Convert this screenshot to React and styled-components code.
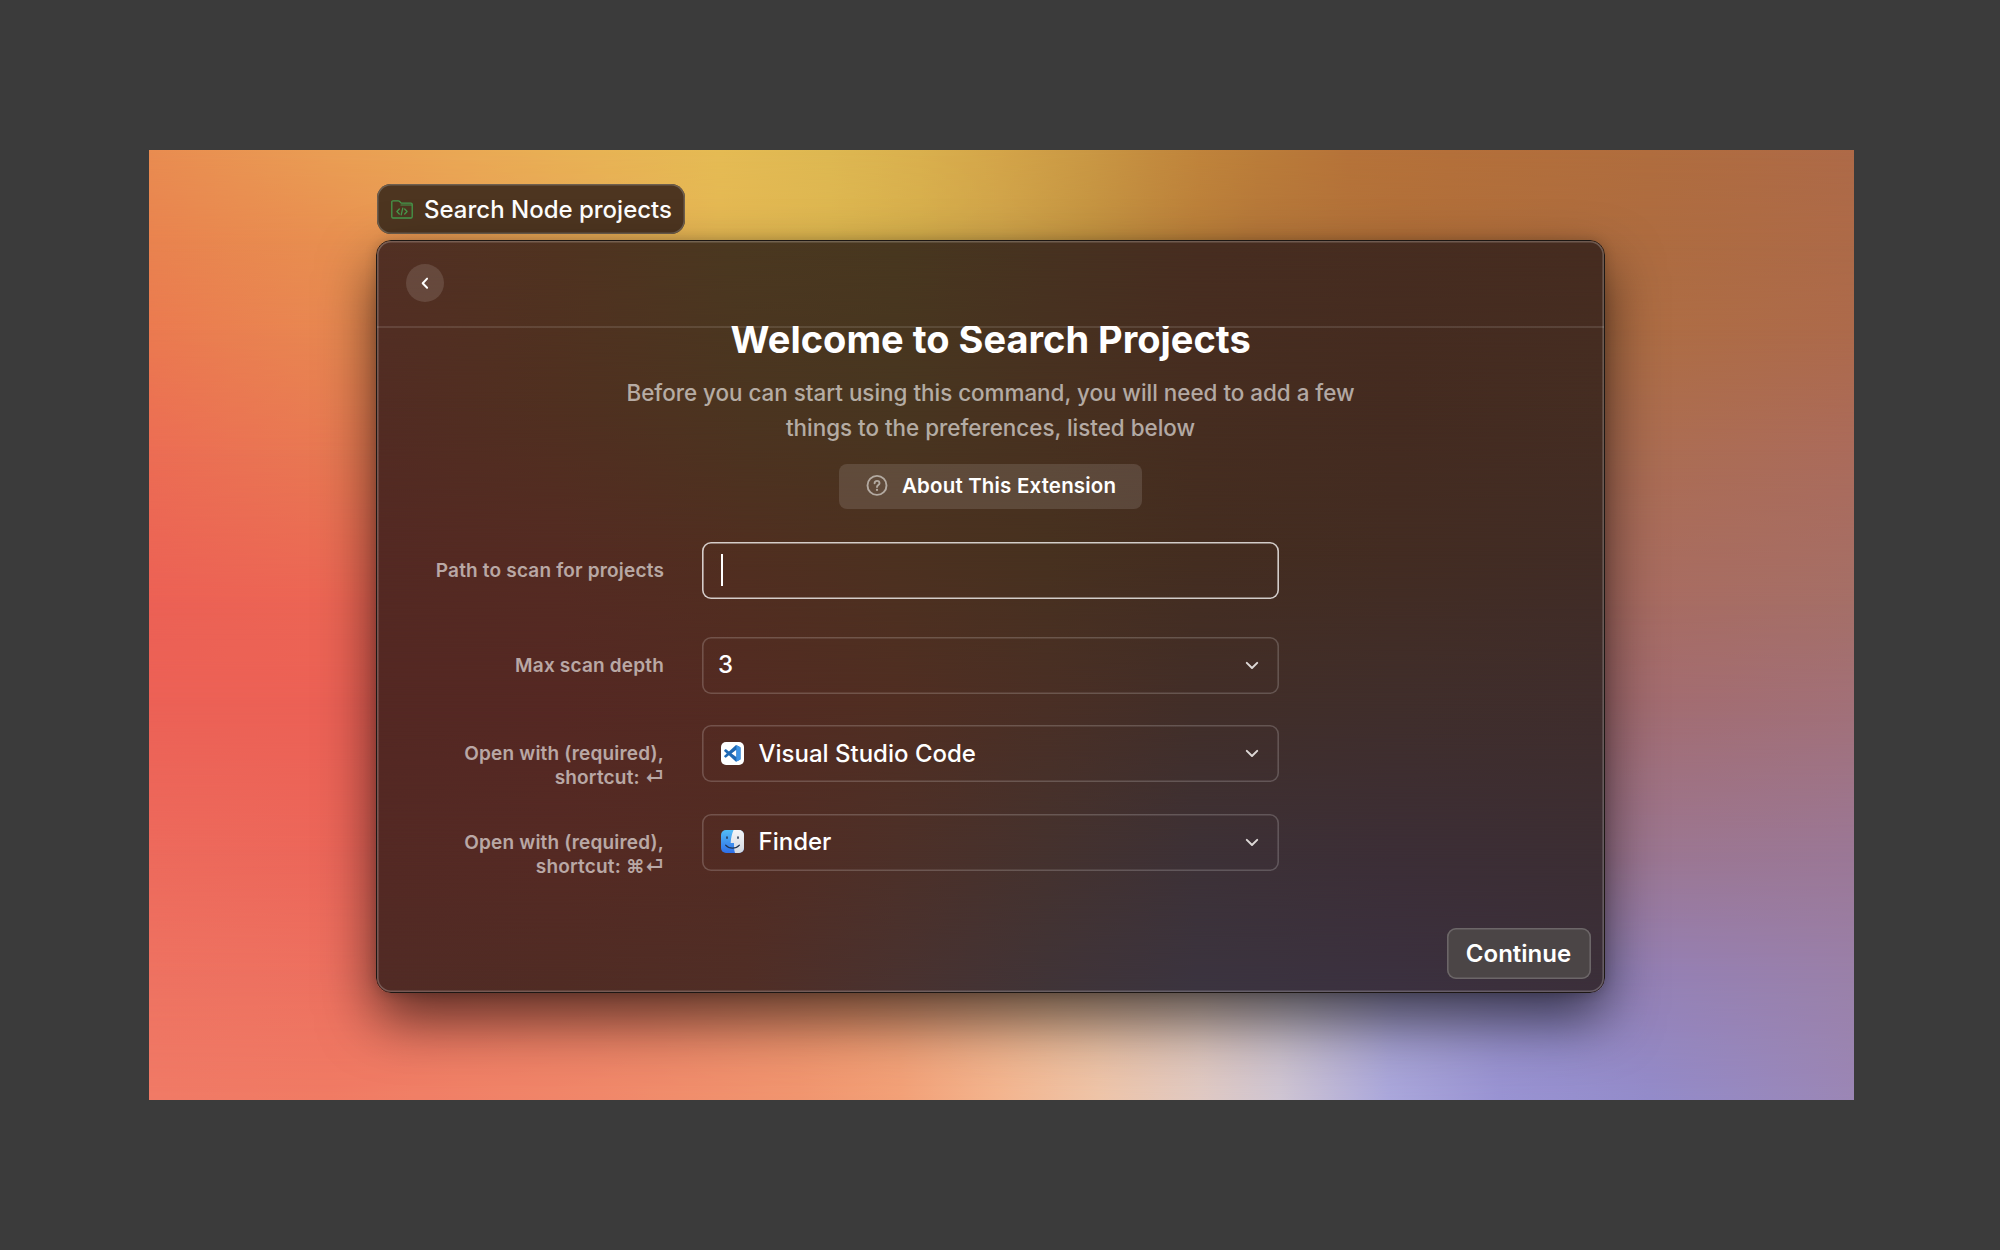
import React from "react";
import styled, { createGlobalStyle } from "styled-components";

const GlobalStyle = createGlobalStyle`
  * { box-sizing: border-box; }
  body { margin: 0; background: #3b3b3b; font-family: Inter, "Noto Sans", sans-serif; }
`;

/* Each row is [y, [x, colour]...] in pixels of the surface it fills. */
const wallpaperRows = [
  [0, [0, "#e98c51"], [180, "#ea9e54"], [320, "#eaa955"], [450, "#e8b355"], [570, "#e5bb54"], [680, "#deb852"], [770, "#dab04e"], [850, "#d4a549"], [940, "#ca9844"], [1000, "#c48c3f"], [1050, "#c0843b"], [1110, "#bb7d39"], [1200, "#b67339"], [1300, "#b4703a"], [1500, "#b06d3e"], [1705, "#ae6a48"]],
  [90, [0, "#e9834f"], [180, "#e88f50"], [320, "#e99d53"], [450, "#e8ab55"], [570, "#e5b853"], [680, "#deb750"], [770, "#d6af4c"], [850, "#cfa44a"], [940, "#c49441"], [1000, "#be883d"], [1050, "#ba7f3a"], [1110, "#b5773a"], [1250, "#b16f39"], [1500, "#ae6c40"], [1705, "#ad6a48"]],
  [180, [0, "#eb7a50"], [200, "#e88951"], [1500, "#ae6d44"], [1705, "#ad6a4b"]],
  [300, [0, "#ec6d54"], [200, "#e87a52"], [1500, "#ac6d52"], [1705, "#ab6b5b"]],
  [450, [0, "#ec6155"], [200, "#ec6654"], [1500, "#a86c62"], [1705, "#a56f67"]],
  [550, [0, "#ec6156"], [200, "#ec6155"], [1500, "#a36c70"], [1705, "#a27077"]],
  [700, [0, "#ed6a5c"], [200, "#ec6659"], [1500, "#9c7690"], [1705, "#9b7795"]],
  [820, [0, "#ee7261"], [200, "#ed705f"], [500, "#ea8064"], [700, "#f09a70"], [900, "#e8b894"], [1050, "#d8bfb4"], [1150, "#bdb4c4"], [1250, "#a09ac8"], [1400, "#9088c4"], [1500, "#9580b4"], [1705, "#9a80a8"]],
  [950, [0, "#f07a66"], [180, "#f07b64"], [450, "#f0886a"], [650, "#f0956f"], [750, "#f2a077"], [850, "#f3b48e"], [950, "#eec4a8"], [1050, "#e0c9c2"], [1130, "#cfc5d2"], [1240, "#aaa7db"], [1350, "#9993d2"], [1500, "#938bca"], [1705, "#9b86b5"]],
];

const glassRows = [
  [0, [0, "#523024"], [180, "#503320"], [350, "#4b3820"], [520, "#48371f"], [670, "#473220"], [820, "#472d20"], [1229, "#462c20"]],
  [160, [0, "#522c23"], [180, "#503020"], [370, "#4b3520"], [520, "#483620"], [670, "#483120"], [820, "#462d20"], [1020, "#442b20"], [1229, "#452d22"]],
  [310, [0, "#542923"], [180, "#542b22"], [370, "#502f20"], [520, "#4c3120"], [670, "#47311f"], [820, "#442d20"], [1020, "#432c22"], [1229, "#412c25"]],
  [460, [0, "#542823"], [180, "#552823"], [370, "#532b22"], [520, "#502e22"], [670, "#4a2f25"], [820, "#422e28"], [1020, "#402e2b"], [1229, "#3f2d2c"]],
  [610, [0, "#542924"], [180, "#552a24"], [370, "#522c23"], [520, "#4d3028"], [670, "#45322e"], [820, "#3d3136"], [1020, "#3c2e36"], [1229, "#3c2e33"]],
  [753, [0, "#512b25"], [180, "#502c24"], [370, "#502e26"], [520, "#493230"], [670, "#403438"], [820, "#3b3440"], [1020, "#3b3140"], [1229, "#3b2f3a"]],
];

const MeshLayer = styled.div`
  position: absolute;
  inset: 0;
`;

function Mesh({ rows }) {
  return rows.map(([y, ...stops], i) => {
    const background = `linear-gradient(to right, ${stops.map(([x, c]) => `${c} ${x}px`).join(", ")})`;
    const mask = i ? `linear-gradient(to bottom, transparent ${rows[i - 1][0]}px, #000 ${y}px)` : "none";
    return <MeshLayer key={y} style={{ background, maskImage: mask }} />;
  });
}

const Page = styled.div`
  width: 2000px;
  height: 1250px;
  padding: 150px 146px 150px 149px;
  background: #3b3b3b;
`;

const Wallpaper = styled.div`
  position: relative;
  height: 100%;
  padding: 34px 0 0 227px;
  overflow: hidden;
`;

const Stack = styled.div`
  position: relative;
  display: flex;
  flex-direction: column;
  align-items: flex-start;
  gap: 6px;
`;

const CommandTag = styled.div`
  display: flex;
  align-items: center;
  gap: 11px;
  width: 308px;
  height: 50px;
  margin-left: 1px;
  padding: 0 0 0 14px;
  border-radius: 14px;
  background: #4d3520;
  box-shadow: inset 0 0 0 1.5px #6e5f4f;
  color: #fff;
  font-size: 24px;
  font-weight: 500;
  white-space: nowrap;
`;

const Window = styled.main`
  position: relative;
  width: 1229px;
  height: 753px;
  border: 1px solid #1d1714;
  border-radius: 15px;
  overflow: hidden;
  display: flex;
  flex-direction: column;
`;

const WindowShadow = styled.div`
  border-radius: 15px;
  box-shadow: 0 26px 56px rgba(0, 0, 0, 0.62), 0 0 12px rgba(0, 0, 0, 0.18);
`;

const WindowEdge = styled.div`
  position: absolute;
  inset: 0;
  border-radius: 14px;
  box-shadow: inset 0 0 0 1.6px rgba(255, 255, 255, 0.22);
  pointer-events: none;
`;

const Header = styled.header`
  position: relative;
  height: 85px;
  padding: 23px 0 0 29px;
`;

const BackButton = styled.button`
  display: grid;
  place-items: center;
  width: 38px;
  height: 38px;
  padding: 0;
  border: 0;
  border-radius: 50%;
  background: rgba(255, 255, 255, 0.12);
`;

const Body = styled.section`
  position: relative;
  flex: 1;
  overflow: hidden;
  display: flex;
  flex-direction: column;
  align-items: center;
  background: linear-gradient(rgba(255, 255, 255, 0.11), rgba(255, 255, 255, 0.11)) top / 100% 2px no-repeat;
`;

const Title = styled.h1`
  margin: -10px 0 0;
  color: #fff;
  font-size: 38px;
  font-weight: 700;
  line-height: 46px;
`;

const Intro = styled.p`
  width: 760px;
  margin: 13.4px 0 0;
  color: rgba(255, 255, 255, 0.6);
  font-size: 22.4px;
  font-weight: 500;
  line-height: 35px;
  text-align: center;
`;

const AboutButton = styled.button`
  display: flex;
  align-items: center;
  gap: 14px;
  width: 303px;
  height: 45px;
  margin-top: 18.6px;
  padding: 0 0 2px 27px;
  border: 0;
  border-radius: 8px;
  background: rgba(255, 255, 255, 0.12);
  color: #fff;
  font: 600 20.5px Inter, sans-serif;
  letter-spacing: 0.17px;
  white-space: nowrap;
`;

const Form = styled.div`
  display: flex;
  flex-direction: column;
  gap: 31.5px;
  margin-top: 33px;
`;

const FormRow = styled.div`
  display: grid;
  grid-template-columns: 288px 577px 288px;
  grid-template-rows: 57px;
  column-gap: 38px;
  margin-bottom: ${(p) => (p.$spaced ? "6.5px" : 0)};
`;

const Label = styled.label`
  padding-top: 16.6px;
  color: rgba(255, 255, 255, 0.6);
  font-size: 19px;
  font-weight: 600;
  letter-spacing: 0.18px;
  line-height: 24px;
  text-align: right;
  white-space: pre-line;
`;

const Field = styled.div`
  display: flex;
  align-items: center;
  gap: 15px;
  height: 57px;
  padding: 0 20px 1px ${(p) => (p.$inset ? "18.5px" : "16px")};
  border-radius: 9px;
  box-shadow: inset 0 0 0 1.6px ${(p) => (p.$focused ? "rgba(255, 255, 255, 0.76)" : "rgba(255, 255, 255, 0.19)")};
  color: #fff;
  font-size: 24px;
  font-weight: 500;
`;

const Value = styled.span`
  flex: 1;
`;

const Caret = styled.span`
  width: 2px;
  height: 32px;
  background: #fff;
`;

const Footer = styled.footer`
  position: relative;
  display: flex;
  justify-content: flex-end;
  padding: 0 13px 13px 0;
`;

const ContinueButton = styled.button`
  width: 144px;
  height: 51px;
  margin-top: -1px;
  padding: 0 1px 0 0;
  border: 0;
  border-radius: 9px;
  background: #4b4546;
  box-shadow: inset 0 0 0 1.6px #6c6668;
  color: #fff;
  font: 600 24px Inter, sans-serif;
`;

const FolderIcon = () => (
  <svg width="22" height="19" viewBox="0 0 22 19" fill="none" stroke="#469a4c" strokeWidth="1.3" strokeLinecap="round" strokeLinejoin="round">
    <path d="M.8 2V16.8Q.8 18 2 18H20Q21.2 18 21.2 16.8V4.3Q21.2 3.1 20 3.1H10.2L8.4 1.3Q7.9.8 7.2.8H2Q.8.8.8 2Z" />
    <path d="M10 5H20.8" strokeWidth="1.1" />
    <path d="M8.3 9L5.9 11.5 8.3 14M13.7 9L16.1 11.5 13.7 14M11.8 8.2L10.2 14.8" />
  </svg>
);

const BackIcon = () => (
  <svg width="10" height="14" viewBox="0 0 10 14" fill="none" stroke="#fff" strokeWidth="2" strokeLinecap="round" strokeLinejoin="round">
    <path d="M7.1 2.6L2.7 7.2 7.1 11.8" />
  </svg>
);

const HelpIcon = () => (
  <svg width="22" height="22" viewBox="0 0 22 22" fill="none" stroke="#b3aaa1" strokeWidth="1.9" strokeLinecap="round" strokeLinejoin="round">
    <circle cx="11" cy="11.4" r="9.5" />
    <path d="M8.6 9.2C8.6 6 13.5 6.1 13.5 9.2C13.5 11 11 11.1 11 13" />
    <path d="M11 15.8V15.9" strokeWidth="2.2" />
  </svg>
);

const ChevronIcon = () => (
  <svg width="14" height="10" viewBox="0 0 14 10" fill="none" stroke="#ddd8d6" strokeWidth="2" strokeLinecap="round" strokeLinejoin="round">
    <path d="M1.8 2.9L7 8 12.2 2.9" />
  </svg>
);

const CodeIcon = () => (
  <svg width="23" height="23" viewBox="0 0 23 23">
    <rect width="23" height="23" rx="5" fill="#fff" />
    <g transform="translate(3.1 3.2) scale(.164)">
      <path fill="#1f68b3" fillRule="evenodd" d="M70.9 99.3C72.5 99.9 74.3 99.9 75.9 99.1L96.5 89.2C98.6 88.2 100 86 100 83.6V16.4C100 14 98.6 11.8 96.5 10.8L75.9.9C73.8-.1 71.3.1 69.5 1.4L29.4 38 12.2 25C10.6 23.8 8.4 23.9 6.9 25.2L1.4 30.3C-.5 31.9-.5 34.8 1.4 36.4L16.2 50 1.4 63.6C-.5 65.2-.5 68.1 1.4 69.7L6.9 74.8C8.4 76.1 10.6 76.2 12.2 75L29.4 62 68.8 97.9C69.4 98.5 70.1 99 70.9 99.3ZM75 27.3L45.1 50 75 72.7Z" />
      <path fill="#3e93e4" d="M75.9 99.1L96.5 89.2C98.6 88.2 100 86 100 83.6V16.4C100 14 98.6 11.8 96.5 10.8L75.9.9C73.8-.1 71.3.1 69.5 1.4C72 .5 75 2.5 75 6V94C75 97.5 72 99.5 70.5 99.2C72.5 99.9 74.3 99.9 75.9 99.1Z" />
    </g>
  </svg>
);

const FinderIcon = () => (
  <svg width="23" height="23" viewBox="0 0 23 23" fill="none" strokeLinecap="round">
    <defs>
      <linearGradient id="finderBlue" x1="0" y1="0" x2="0" y2="1">
        <stop offset="0" stopColor="#52bdf7" />
        <stop offset="1" stopColor="#2f6fe8" />
      </linearGradient>
      <linearGradient id="finderWhite" x1="0" y1="0" x2="0" y2="1">
        <stop offset="0" stopColor="#f4f5f7" />
        <stop offset="1" stopColor="#d3d9e1" />
      </linearGradient>
      <clipPath id="finderShape">
        <rect width="23" height="23" rx="5" />
      </clipPath>
    </defs>
    <g clipPath="url(#finderShape)">
      <rect width="23" height="23" fill="url(#finderBlue)" />
      <path d="M12.6 0C10.8 4 9.9 8.5 9.7 12.9H13C12.9 16.5 13.1 20 14 23H23V0Z" fill="url(#finderWhite)" />
    </g>
    <path d="M6 6.9V8.3M17 6.9V8.3" stroke="#1f3350" strokeWidth="1.5" />
    <path d="M4.6 15.2C8.2 19.2 14.8 19.2 18.4 15.2" stroke="#1f3350" strokeWidth="1.2" />
  </svg>
);

function Select({ icon, children }) {
  return (
    <Field $inset={Boolean(icon)}>
      {icon}
      <Value>{children}</Value>
      <ChevronIcon />
    </Field>
  );
}

export default function App() {
  return (
    <Page>
      <GlobalStyle />
      <Wallpaper>
        <Mesh rows={wallpaperRows} />
        <Stack>
          <CommandTag>
            <FolderIcon />
            Search Node projects
          </CommandTag>
          <WindowShadow>
            <Window>
              <Mesh rows={glassRows} />
              <Header>
                <BackButton aria-label="Back">
                  <BackIcon />
                </BackButton>
              </Header>
              <Body>
                <Title>Welcome to Search Projects</Title>
                <Intro>
                  Before you can start using this command, you will need to add a few
                  <br />
                  things to the preferences, listed below
                </Intro>
                <AboutButton>
                  <HelpIcon />
                  About This Extension
                </AboutButton>
                <Form>
                  <FormRow $spaced>
                    <Label>Path to scan for projects</Label>
                    <Field $focused $inset>
                      <Caret />
                    </Field>
                  </FormRow>
                  <FormRow>
                    <Label>Max scan depth</Label>
                    <Select>3</Select>
                  </FormRow>
                  <FormRow>
                    <Label>{"Open with (required),\nshortcut: ⏎"}</Label>
                    <Select icon={<CodeIcon />}>Visual Studio Code</Select>
                  </FormRow>
                  <FormRow>
                    <Label>{"Open with (required),\nshortcut: ⌘⏎"}</Label>
                    <Select icon={<FinderIcon />}>Finder</Select>
                  </FormRow>
                </Form>
              </Body>
              <Footer>
                <ContinueButton>Continue</ContinueButton>
              </Footer>
              <WindowEdge />
            </Window>
          </WindowShadow>
        </Stack>
      </Wallpaper>
    </Page>
  );
}
